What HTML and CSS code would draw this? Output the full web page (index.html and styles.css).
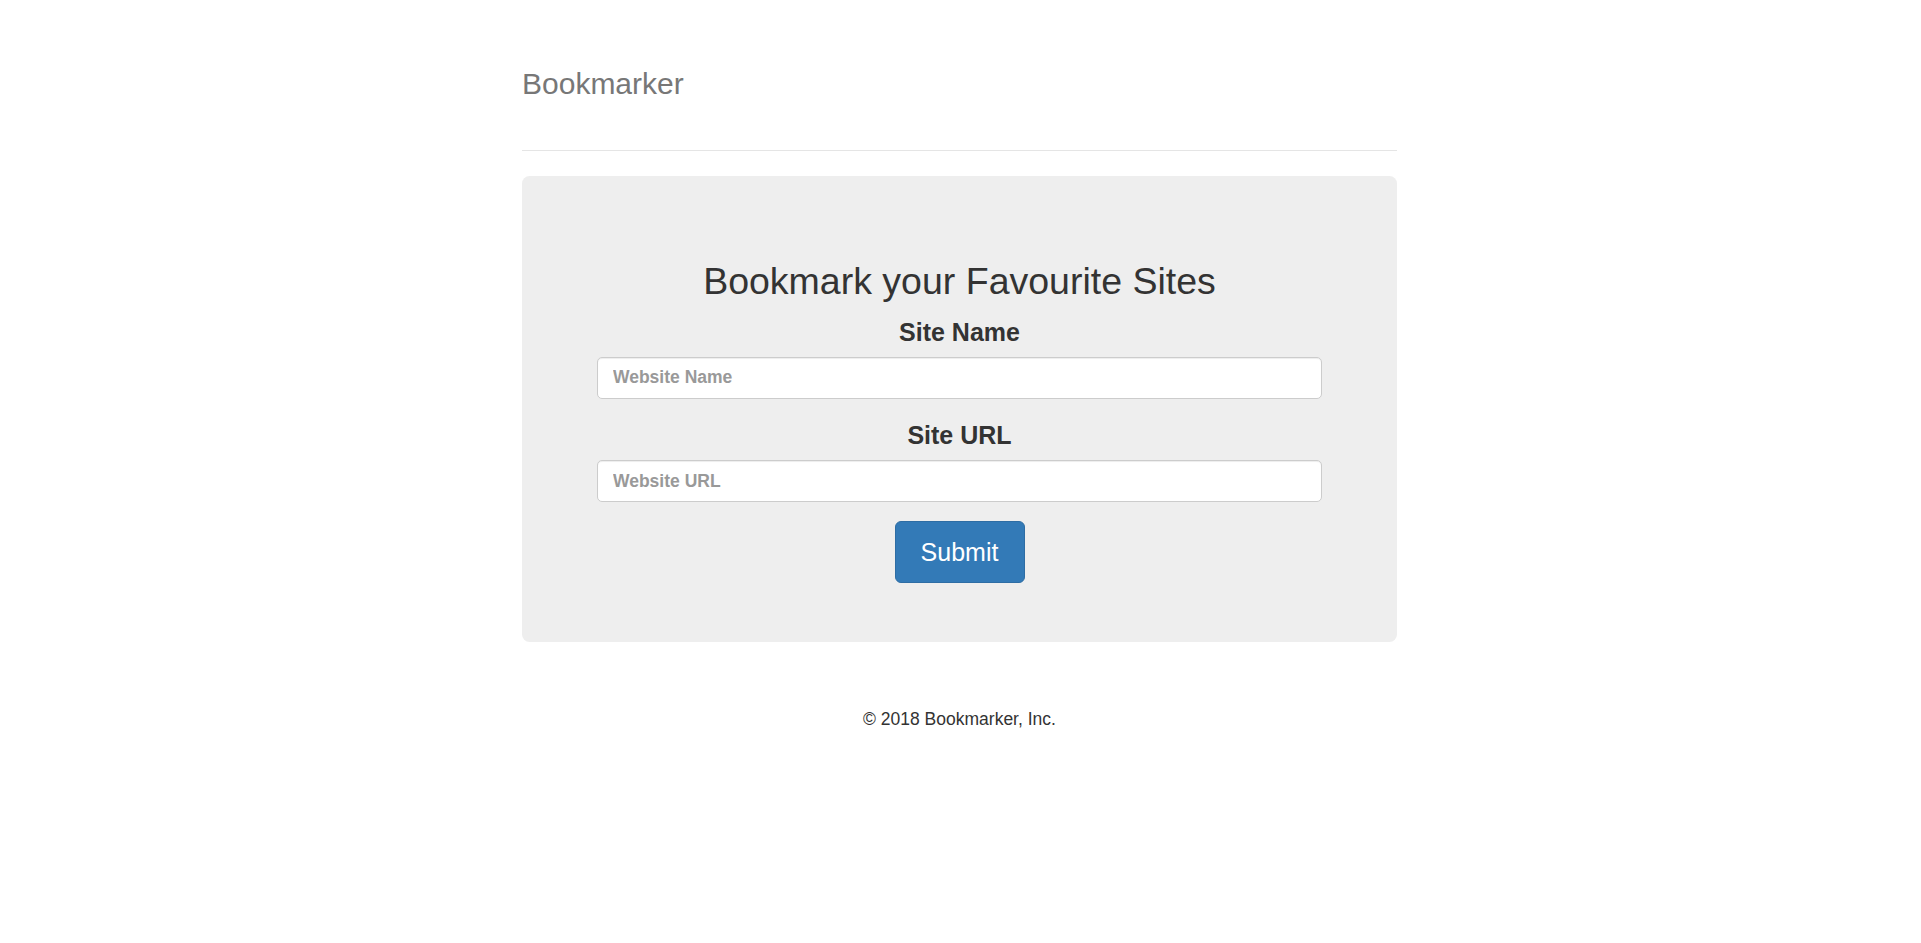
FILE: index.html
```html
<!DOCTYPE html>
<html lang="en">
<head>
<meta charset="utf-8">
<title>Bookmarker</title>
<link rel="stylesheet" href="styles.css">
</head>
<body>
<div class="container">
  <header class="header">
    <h3 class="brand">Bookmarker</h3>
  </header>
  <section class="jumbotron">
    <h2 class="title">Bookmark your Favourite Sites</h2>
    <form class="form">
      <div class="form-group">
        <label class="label" for="siteName">Site Name</label>
        <input class="form-control" type="text" id="siteName" placeholder="Website Name">
      </div>
      <div class="form-group">
        <label class="label" for="siteUrl">Site URL</label>
        <input class="form-control" type="text" id="siteUrl" placeholder="Website URL">
      </div>
      <button type="button" class="btn">Submit</button>
    </form>
  </section>
  <footer class="footer">
    <p class="copy">&copy; 2018 Bookmarker, Inc.</p>
  </footer>
</div>
</body>
</html>
```
FILE: styles.css
```css
* { box-sizing: border-box; }
html, body { margin: 0; padding: 0; background: #fff; }
body {
  font-family: "Liberation Sans", Arial, Helvetica, sans-serif;
  font-size: 17.5px;
  line-height: 25px;
  color: #333;
}
.container {
  width: 877px;
  padding-right: 2px;
  margin: 0 auto;
}
.header {
  padding: 67px 0 50px;
  border-bottom: 1px solid #e5e5e5;
  margin-bottom: 25px;
}
.brand {
  margin: 0;
  font-size: 30px;
  line-height: 33px;
  font-weight: 500;
  color: #777;
}
.jumbotron {
  background: #eee;
  border-radius: 7.5px;
  padding: 60px 75px 59px;
  text-align: center;
}
.title {
  margin: 25px 0 12.5px;
  font-size: 37.5px;
  line-height: 41.25px;
  font-weight: 500;
  color: #333;
}
.form { margin: 0; }
.form-group { margin-bottom: 18.75px; }
.label {
  display: inline-block;
  font-size: 25px;
  line-height: 35.7px;
  font-weight: bold;
  margin-bottom: 6.25px;
  color: #333;
}
.form-control {
  display: block;
  width: 100%;
  height: 42.5px;
  padding: 7.5px 15px;
  font-family: inherit;
  font-size: 17.5px;
  font-weight: bold;
  color: #555;
  background: #fff;
  border: 1px solid #ccc;
  border-radius: 5px;
  box-shadow: inset 0 1px 1px rgba(0,0,0,.075);
  outline: none;
}
.form-control::placeholder { color: #999; opacity: 1; }
.btn {
  display: inline-block;
  height: 62px;
  width: 130px;
  padding: 0;
  font-family: inherit;
  font-size: 25px;
  line-height: 60px;
  color: #fff;
  background: #337ab7;
  border: 1px solid #2e6da4;
  border-radius: 6px;
  cursor: pointer;
}
.footer {
  margin-top: 65px;
  text-align: center;
}
.copy {
  margin: 0 0 12.5px;
  color: #333;
}
```
